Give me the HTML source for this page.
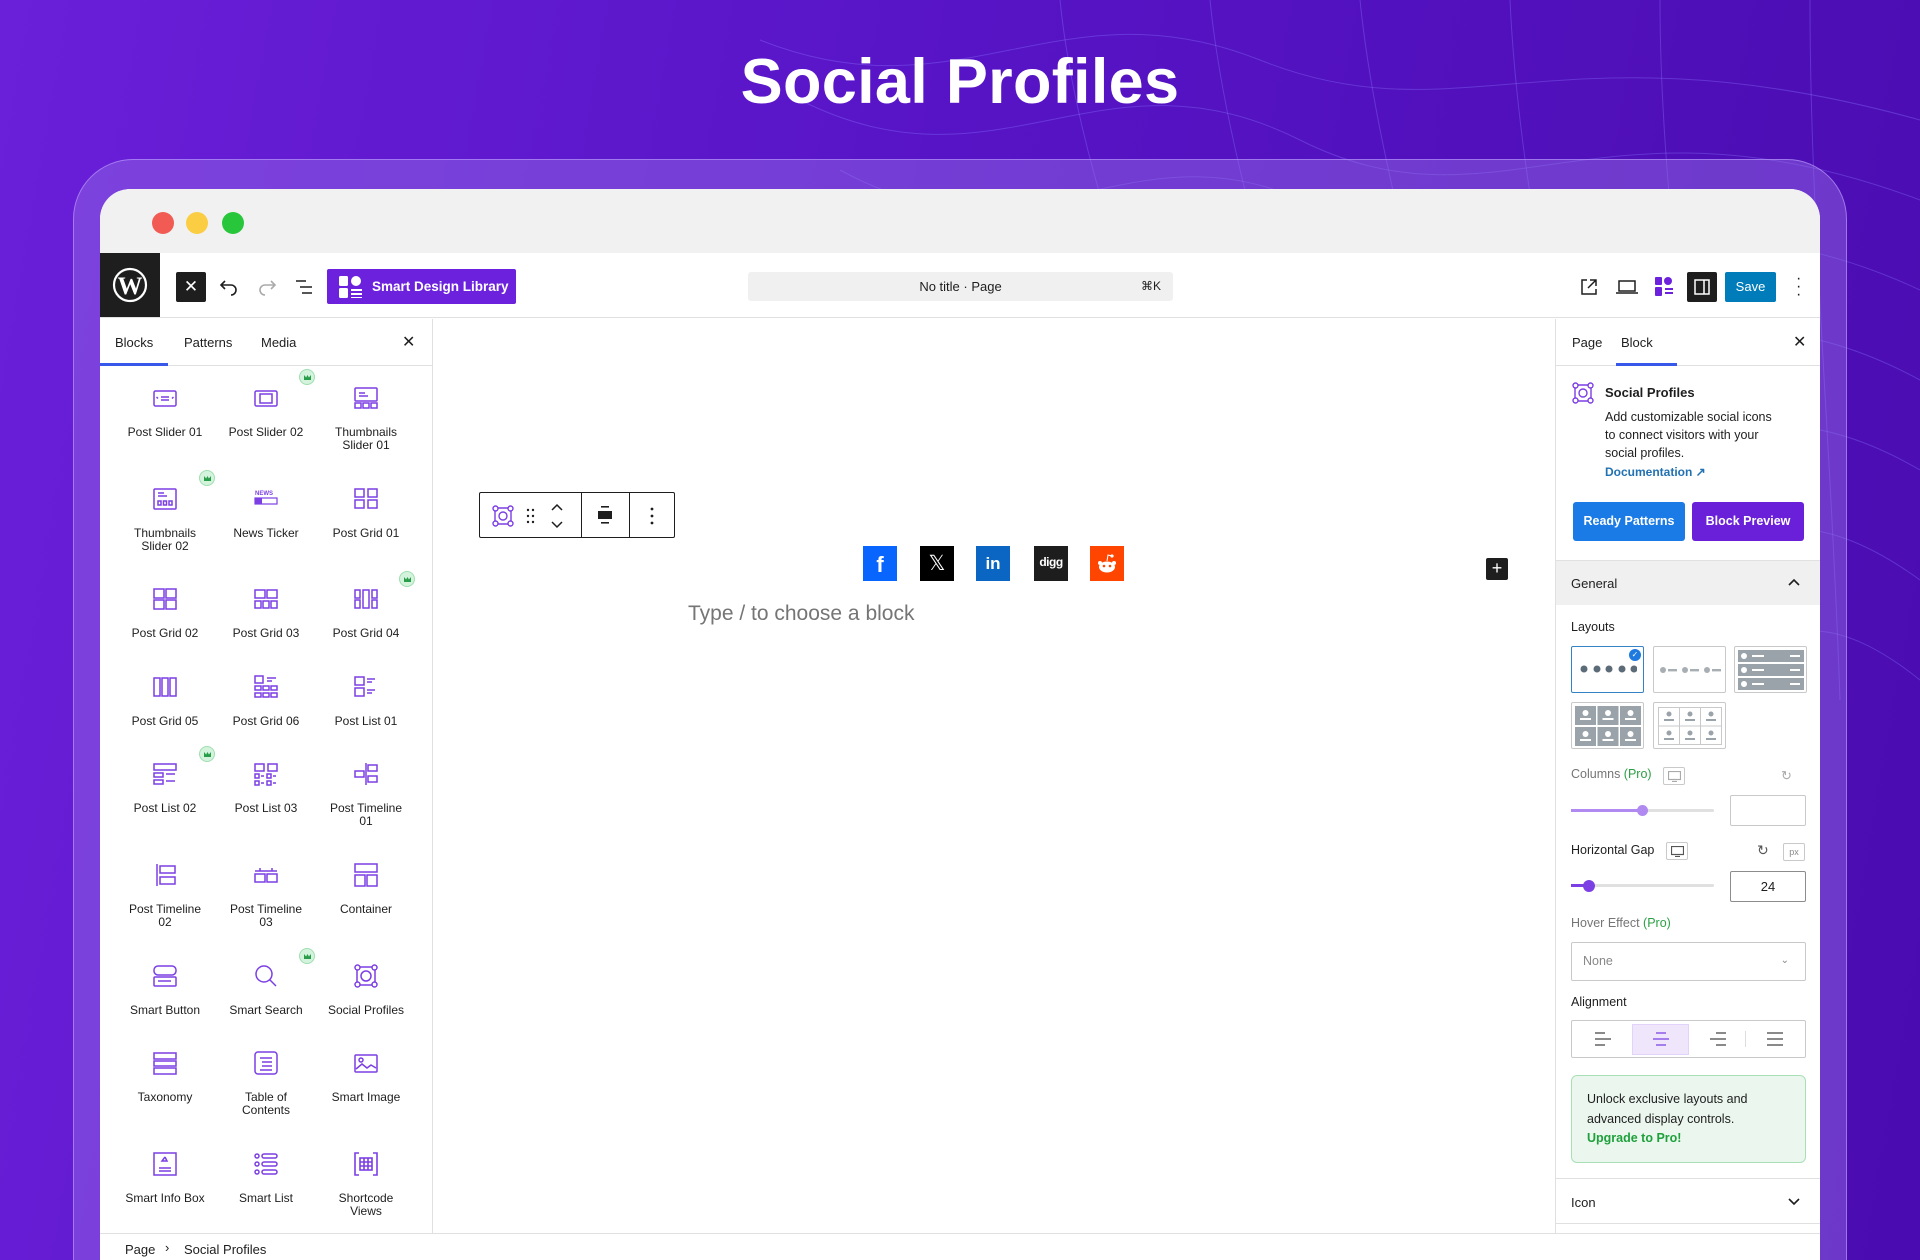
<!DOCTYPE html>
<html style="overflow:hidden;width:1920px;height:1260px"><head><meta charset="utf-8"><style>
*{box-sizing:border-box;margin:0;padding:0}
body{width:1920px;height:1260px;overflow:hidden;position:relative;font-family:"Liberation Sans",sans-serif;background:linear-gradient(100deg,#6a1fd8 0%,#5714c6 45%,#4a0cb0 100%);color:#1e1e1e}
.abs{position:absolute}
h1{position:absolute;left:0;width:1920px;top:46px;text-align:center;color:#fff;font-size:63px;font-weight:700;letter-spacing:0.3px}
.frame{left:73px;top:159px;width:1774px;height:1101px;border-radius:60px 60px 0 0;background:rgba(150,110,230,0.45);border:1px solid rgba(190,160,255,0.6);border-bottom:none}
.win{left:100px;top:189px;width:1720px;height:1071px;border-radius:30px 30px 0 0;background:#fff;overflow:hidden}
.tbar{left:0;top:0;width:1720px;height:64px;background:#f1f1f1}
.dot{width:22px;height:22px;border-radius:50%;top:23px}
.hdr{left:0;top:64px;width:1720px;height:65px;background:#fff;border-bottom:1px solid #e0e0e0}
.lsb{left:0;top:130px;width:333px;height:914px;border-right:1px solid #e0e0e0;background:#fff}
.rsb{left:1455px;top:130px;width:265px;height:914px;border-left:1px solid #e0e0e0;background:#fff}
.foot{left:0;top:1044px;width:1720px;height:30px;border-top:1px solid #e0e0e0;background:#fff;font-size:13px}
.item{position:absolute;width:100px;text-align:center;font-size:12px;line-height:13px;color:#1e1e1e}
.item svg{display:block;margin:0 auto 16px}
.crown{position:absolute;width:16px;height:16px;border-radius:50%;background:#d4f3dc;border:1px solid #9fdfb0}
.crown:after{content:"";position:absolute;left:4px;top:5px;width:7px;height:5px;background:#2a9d4a;clip-path:polygon(0 100%,0 0,30% 50%,50% 0,70% 50%,100% 0,100% 100%)}
.lbl{font-size:12.5px;color:#1e1e1e}
.pro{color:#2aa044}
.box{position:absolute;border:1px solid #c9c9c9;border-radius:2px;background:#fff}
</style></head><body>
<svg class="abs" style="left:760px;top:0" width="1160" height="900" fill="none" stroke="rgba(140,120,255,0.35)" stroke-width="1">
<path d="M0 40 C200 120 300 -20 500 60 S800 20 1160 120"/>
<path d="M40 100 C240 200 340 40 540 140 S840 80 1160 200"/>
<path d="M80 170 C280 280 380 100 580 220 S880 160 1160 290"/>
<path d="M140 260 C320 380 420 180 620 320 S900 240 1160 380"/>
<path d="M200 360 C360 460 460 260 660 420 S920 330 1160 470"/>
<path d="M300 460 C420 520 520 340 720 520 S940 420 1160 580"/>
<path d="M400 560 C480 600 580 420 780 620 S960 520 1160 680"/>
<path d="M300 0 C320 200 420 400 460 600"/><path d="M450 0 C470 200 560 420 600 640"/>
<path d="M600 0 C620 200 700 400 720 660"/><path d="M750 0 C760 220 820 420 840 680"/>
<path d="M900 0 C900 220 940 420 960 700"/><path d="M1050 0 C1050 220 1070 420 1080 700"/>
</svg>
<h1>Social Profiles</h1>
<div class="abs frame"></div>
<div class="abs win">
 <div class="abs tbar"></div>
 <div class="abs dot" style="left:52px;background:#f25a54"></div>
 <div class="abs dot" style="left:86px;background:#fbcd42"></div>
 <div class="abs dot" style="left:122px;background:#28c73b"></div>
 <div class="abs hdr">
  <div class="abs" style="left:0;top:0;width:60px;height:64px;background:#1e1e1e"><svg style="margin:14px 12px" width="36" height="36" viewBox="0 0 36 36"><circle cx="18" cy="18" r="16" fill="none" stroke="#fff" stroke-width="2.2"/><text x="18" y="27" text-anchor="middle" fill="#fff" font-family="Liberation Serif" font-weight="700" font-size="25">W</text></svg></div>
  <div class="abs" style="left:76px;top:19px;width:30px;height:30px;background:#1e1e1e;border-radius:2px;color:#fff;text-align:center;line-height:30px;font-size:17px">✕</div>
  <svg class="abs" style="left:119px;top:24px" width="20" height="20" fill="none" stroke="#1e1e1e" stroke-width="1.6"><path d="M6 4 L2 8 L6 12 M2 8 H12 A5 5 0 0 1 12 18"/></svg>
  <svg class="abs" style="left:157px;top:24px" width="20" height="20" fill="none" stroke="#aaa" stroke-width="1.6"><path d="M14 4 L18 8 L14 12 M18 8 H8 A5 5 0 0 0 8 18"/></svg>
  <svg class="abs" style="left:194px;top:25px" width="20" height="18" stroke="#1e1e1e" stroke-width="1.6"><path d="M2 3H12M6 9H18M8 15H18"/></svg>
  <div class="abs" style="left:227px;top:16px;width:189px;height:35px;background:#6c22dd;border-radius:2px;color:#fff;font-size:13.5px;font-weight:700;line-height:35px;padding-left:45px">Smart Design Library</div>
  <svg class="abs" style="left:239px;top:23px" width="24" height="22" fill="#fff"><rect x="0" y="0" width="9" height="10" rx="1.5"/><circle cx="17" cy="5" r="5"/><rect x="0" y="12" width="9" height="10" rx="1.5"/><rect x="12" y="13" width="11" height="2"/><rect x="12" y="17" width="11" height="2"/><rect x="12" y="21" width="11" height="1.5"/></svg>
  <div class="abs" style="left:648px;top:19px;width:425px;height:29px;background:#f0f0f0;border-radius:3px;font-size:13px;text-align:center;line-height:29px">No title · Page<span style="position:absolute;right:12px;font-size:12px">⌘K</span></div>
  <svg class="abs" style="left:1479px;top:24px" width="20" height="20" fill="none" stroke="#1e1e1e" stroke-width="1.5"><path d="M8 3H3V17H17V12M11 3H17V9M17 3L9 11"/></svg>
  <svg class="abs" style="left:1516px;top:26px" width="22" height="16" fill="none" stroke="#1e1e1e" stroke-width="1.5"><rect x="3" y="2" width="16" height="10"/><path d="M0 14H22"/></svg>
  <svg class="abs" style="left:1555px;top:24px" width="18" height="20" fill="#6c22dd"><rect x="0" y="0" width="7" height="8" rx="1"/><circle cx="13" cy="4" r="4"/><rect x="0" y="10" width="7" height="9" rx="1"/><rect x="10" y="11" width="8" height="2"/><rect x="10" y="15" width="8" height="2"/></svg>
  <div class="abs" style="left:1587px;top:19px;width:30px;height:30px;background:#1e1e1e;border-radius:2px"><svg style="margin:7px" width="16" height="16" fill="none" stroke="#fff" stroke-width="1.5"><rect x="1" y="1" width="14" height="14"/><path d="M10 1V15"/></svg></div>
  <div class="abs" style="left:1625px;top:19px;width:51px;height:30px;background:#007cba;border-radius:2px;color:#fff;font-size:13px;text-align:center;line-height:30px">Save</div>
  <div class="abs" style="left:1696px;top:22px;width:4px;font-size:16px;line-height:8px;color:#1e1e1e">·<br>·<br>·</div>
 </div>
 <div class="abs lsb">
  <div class="abs" style="left:0;top:0;width:333px;height:47px;border-bottom:1px solid #e0e0e0;font-size:13px">
   <span class="abs" style="left:15px;top:16px">Blocks</span><span class="abs" style="left:84px;top:16px">Patterns</span><span class="abs" style="left:161px;top:16px">Media</span><span class="abs" style="left:302px;top:13px;font-size:16px">✕</span>
   <div class="abs" style="left:0;top:44px;width:68px;height:3px;background:#3858e9"></div>
  </div>
 </div>
 <div class="abs rsb">
  <div class="abs" style="left:0;top:0;width:265px;height:47px;border-bottom:1px solid #e0e0e0;font-size:13px">
   <span class="abs" style="left:16px;top:16px">Page</span><span class="abs" style="left:65px;top:16px">Block</span><span class="abs" style="left:237px;top:13px;font-size:16px">✕</span>
   <div class="abs" style="left:60px;top:44px;width:61px;height:3px;background:#3858e9"></div>
  </div>
 </div>
 <div class="abs foot"><span class="abs" style="left:25px;top:8px">Page</span><span class="abs" style="left:65px;top:6px">›</span><span class="abs" style="left:84px;top:8px">Social Profiles</span></div>
</div>

<div class="item" style="left:115px;top:386px"><svg width="24" height="24" fill="none" stroke="#7b3fe4" stroke-width="1.5"><rect x="1" y="5" width="22" height="15" rx="1.5"/><path d="M8 11H16M8 14H16M5 12.5L3.5 11M19 12.5L20.5 11"/></svg>Post Slider 01</div>
<div class="item" style="left:216px;top:386px"><svg width="24" height="24" fill="none" stroke="#7b3fe4" stroke-width="1.5"><rect x="1" y="5" width="22" height="15" rx="1.5"/><rect x="6" y="8" width="12" height="9"/></svg>Post Slider 02</div>
<div class="item" style="left:316px;top:386px"><svg width="24" height="24" fill="none" stroke="#7b3fe4" stroke-width="1.5"><rect x="1" y="2" width="22" height="13" rx="1"/><path d="M5 7H11M5 10H14"/><rect x="1" y="17" width="6" height="5"/><rect x="9" y="17" width="6" height="5"/><rect x="17" y="17" width="6" height="5"/></svg>Thumbnails<br>Slider 01</div>
<div class="item" style="left:115px;top:487px"><svg width="24" height="24" fill="none" stroke="#7b3fe4" stroke-width="1.5"><rect x="1" y="2" width="22" height="20" rx="1"/><path d="M5 6H11M5 9H14"/><rect x="5" y="14" width="3" height="4"/><rect x="10.5" y="14" width="3" height="4"/><rect x="16" y="14" width="3" height="4"/></svg>Thumbnails<br>Slider 02</div>
<div class="item" style="left:216px;top:487px"><svg width="24" height="24"><text x="1" y="8" font-size="6" fill="#7b3fe4" font-weight="700" font-family="Liberation Sans">NEWS</text><rect x="1" y="11" width="22" height="6" fill="none" stroke="#7b3fe4" stroke-width="1.2"/><rect x="1" y="11" width="7" height="6" fill="#7b3fe4"/></svg>News Ticker</div>
<div class="item" style="left:316px;top:487px"><svg width="24" height="24" fill="none" stroke="#7b3fe4" stroke-width="1.5"><rect x="1" y="2" width="9" height="8"/><rect x="14" y="2" width="9" height="8"/><rect x="1" y="13" width="9" height="8"/><rect x="14" y="13" width="9" height="8"/></svg>Post Grid 01</div>
<div class="item" style="left:115px;top:587px"><svg width="24" height="24" fill="none" stroke="#7b3fe4" stroke-width="1.5"><rect x="1" y="2" width="10" height="9"/><rect x="13" y="2" width="10" height="9"/><rect x="1" y="13" width="10" height="9"/><rect x="13" y="13" width="10" height="9"/></svg>Post Grid 02</div>
<div class="item" style="left:216px;top:587px"><svg width="24" height="24" fill="none" stroke="#7b3fe4" stroke-width="1.5"><rect x="1" y="3" width="10" height="8"/><rect x="13" y="3" width="10" height="8"/><rect x="1" y="14" width="6" height="7"/><rect x="9" y="14" width="6" height="7"/><rect x="17" y="14" width="6" height="7"/></svg>Post Grid 03</div>
<div class="item" style="left:316px;top:587px"><svg width="24" height="24" fill="none" stroke="#7b3fe4" stroke-width="1.5"><rect x="1" y="3" width="5" height="8"/><rect x="1" y="13" width="5" height="8"/><rect x="9" y="3" width="6" height="18"/><rect x="18" y="3" width="5" height="8"/><rect x="18" y="13" width="5" height="8"/></svg>Post Grid 04</div>
<div class="item" style="left:115px;top:675px"><svg width="24" height="24" fill="none" stroke="#7b3fe4" stroke-width="1.5"><rect x="1" y="3" width="6" height="18"/><rect x="9" y="3" width="6" height="18"/><rect x="17" y="3" width="6" height="18"/></svg>Post Grid 05</div>
<div class="item" style="left:216px;top:675px"><svg width="24" height="24" fill="none" stroke="#7b3fe4" stroke-width="1.5"><rect x="1" y="1" width="8" height="7"/><path d="M13 3H22M13 6H18"/><rect x="1" y="11" width="6" height="4"/><rect x="9" y="11" width="6" height="4"/><rect x="17" y="11" width="6" height="4"/><rect x="1" y="18" width="6" height="4"/><rect x="9" y="18" width="6" height="4"/><rect x="17" y="18" width="6" height="4"/></svg>Post Grid 06</div>
<div class="item" style="left:316px;top:675px"><svg width="24" height="24" fill="none" stroke="#7b3fe4" stroke-width="1.5"><rect x="1" y="2" width="9" height="8"/><rect x="1" y="13" width="9" height="8"/><path d="M13 4H21M13 7H18M13 15H21M13 18H18"/></svg>Post List 01</div>
<div class="item" style="left:115px;top:762px"><svg width="24" height="24" fill="none" stroke="#7b3fe4" stroke-width="1.5"><rect x="1" y="2" width="22" height="6"/><rect x="1" y="11" width="9" height="4"/><rect x="1" y="18" width="9" height="4"/><path d="M13 12H22M13 19H22"/></svg>Post List 02</div>
<div class="item" style="left:216px;top:762px"><svg width="24" height="24" fill="none" stroke="#7b3fe4" stroke-width="1.5"><rect x="1" y="2" width="9" height="7"/><rect x="14" y="2" width="9" height="7"/><rect x="1" y="12" width="4" height="4"/><rect x="13" y="12" width="4" height="4"/><rect x="1" y="19" width="4" height="4"/><rect x="13" y="19" width="4" height="4"/><path d="M7 14H10M19 14H22M7 21H10M19 21H22"/></svg>Post List 03</div>
<div class="item" style="left:316px;top:762px"><svg width="24" height="24" fill="none" stroke="#7b3fe4" stroke-width="1.5"><path d="M12 1V23"/><rect x="14" y="3" width="9" height="6"/><rect x="14" y="14" width="9" height="6"/><rect x="1" y="9" width="9" height="6"/></svg>Post Timeline<br>01</div>
<div class="item" style="left:115px;top:863px"><svg width="24" height="24" fill="none" stroke="#7b3fe4" stroke-width="1.5"><path d="M4 1V23"/><rect x="7" y="3" width="15" height="7"/><rect x="7" y="14" width="15" height="7"/></svg>Post Timeline<br>02</div>
<div class="item" style="left:216px;top:863px"><svg width="24" height="24" fill="none" stroke="#7b3fe4" stroke-width="1.5"><path d="M1 8H23M6 5V8M18 5V8"/><rect x="1" y="11" width="10" height="8"/><rect x="13" y="11" width="10" height="8"/></svg>Post Timeline<br>03</div>
<div class="item" style="left:316px;top:863px"><svg width="24" height="24" fill="none" stroke="#7b3fe4" stroke-width="1.5"><rect x="1" y="1" width="22" height="8"/><rect x="1" y="12" width="10" height="11"/><rect x="13" y="12" width="10" height="11"/></svg>Container</div>
<div class="item" style="left:115px;top:964px"><svg width="24" height="24" fill="none" stroke="#7b3fe4" stroke-width="1.5"><rect x="1" y="2" width="22" height="9" rx="4"/><rect x="1" y="13" width="22" height="9" rx="1"/><path d="M5 17H18"/></svg>Smart Button</div>
<div class="item" style="left:216px;top:964px"><svg width="24" height="24" fill="none" stroke="#7b3fe4" stroke-width="1.5"><circle cx="10" cy="10" r="8"/><path d="M16 16L22 22"/></svg>Smart Search</div>
<div class="item" style="left:316px;top:964px"><svg width="24" height="24" fill="none" stroke="#7b3fe4" stroke-width="1.5"><rect x="3" y="3" width="18" height="18" rx="3"/><circle cx="12" cy="12" r="5"/><circle cx="3.5" cy="3.5" r="2.5" fill="#fff"/><circle cx="20.5" cy="3.5" r="2.5" fill="#fff"/><circle cx="3.5" cy="20.5" r="2.5" fill="#fff"/><circle cx="20.5" cy="20.5" r="2.5" fill="#fff"/></svg>Social Profiles</div>
<div class="item" style="left:115px;top:1051px"><svg width="24" height="24" fill="none" stroke="#7b3fe4" stroke-width="1.5"><rect x="1" y="2" width="22" height="6"/><rect x="1" y="10" width="22" height="5"/><rect x="1" y="17" width="22" height="6"/></svg>Taxonomy</div>
<div class="item" style="left:216px;top:1051px"><svg width="24" height="24" fill="none" stroke="#7b3fe4" stroke-width="1.5"><rect x="1" y="1" width="22" height="22" rx="3"/><path d="M6 7H18M8 11H18M8 15H18M6 19H18"/></svg>Table of<br>Contents</div>
<div class="item" style="left:316px;top:1051px"><svg width="24" height="24" fill="none" stroke="#7b3fe4" stroke-width="1.5"><rect x="1" y="4" width="22" height="17" rx="1"/><circle cx="7" cy="9" r="2"/><path d="M2 18L8 13L13 17L17 14L22 17"/></svg>Smart Image</div>
<div class="item" style="left:115px;top:1152px"><svg width="24" height="24" fill="none" stroke="#7b3fe4" stroke-width="1.5"><rect x="1" y="1" width="22" height="22"/><path d="M12 5L14 9L9 9L12 5M6 16H18M6 19H18"/></svg>Smart Info Box</div>
<div class="item" style="left:216px;top:1152px"><svg width="24" height="24" fill="none" stroke="#7b3fe4" stroke-width="1.5"><circle cx="3" cy="4" r="2"/><circle cx="3" cy="12" r="2"/><circle cx="3" cy="20" r="2"/><rect x="8" y="2" width="15" height="4" rx="2"/><rect x="8" y="10" width="15" height="4" rx="2"/><rect x="8" y="18" width="15" height="4" rx="2"/></svg>Smart List</div>
<div class="item" style="left:316px;top:1152px"><svg width="24" height="24" fill="none" stroke="#7b3fe4" stroke-width="1.6"><path d="M5 1H1V23H5M19 1H23V23H19"/><rect x="6" y="6" width="12" height="12"/><path d="M6 10H18M6 14H18M10 6V18M14 6V18"/></svg>Shortcode<br>Views</div>
<div class="crown" style="left:299px;top:369px"></div>
<div class="crown" style="left:199px;top:470px"></div>
<div class="crown" style="left:399px;top:571px"></div>
<div class="crown" style="left:199px;top:746px"></div>
<div class="crown" style="left:299px;top:948px"></div>

<div class="abs" style="left:479px;top:492px;width:196px;height:46px;border:1px solid #1e1e1e;background:#fff;border-radius:2px">
 <svg class="abs" style="left:12px;top:12px" width="22" height="22" fill="none" stroke="#7b3fe4" stroke-width="1.4"><rect x="3" y="3" width="16" height="16" rx="3"/><circle cx="11" cy="11" r="4"/><circle cx="3.5" cy="3.5" r="2.5" fill="#fff"/><circle cx="18.5" cy="3.5" r="2.5" fill="#fff"/><circle cx="3.5" cy="18.5" r="2.5" fill="#fff"/><circle cx="18.5" cy="18.5" r="2.5" fill="#fff"/></svg>
 <svg class="abs" style="left:46px;top:15px" width="10" height="16" fill="#1e1e1e"><circle cx="2" cy="2" r="1.2"/><circle cx="7" cy="2" r="1.2"/><circle cx="2" cy="8" r="1.2"/><circle cx="7" cy="8" r="1.2"/><circle cx="2" cy="14" r="1.2"/><circle cx="7" cy="14" r="1.2"/></svg>
 <svg class="abs" style="left:70px;top:10px" width="14" height="26" fill="none" stroke="#1e1e1e" stroke-width="1.5"><path d="M2 7L7 2L12 7M2 19L7 24L12 19"/></svg>
 <div class="abs" style="left:101px;top:0;width:1px;height:44px;background:#1e1e1e"></div>
 <svg class="abs" style="left:117px;top:12px" width="16" height="20" fill="#1e1e1e"><rect x="4" y="1" width="8" height="1.6"/><rect x="1" y="6" width="14" height="8"/><rect x="4" y="17" width="8" height="1.6"/></svg>
 <div class="abs" style="left:149px;top:0;width:1px;height:44px;background:#1e1e1e"></div>
 <svg class="abs" style="left:170px;top:14px" width="4" height="18" fill="#1e1e1e"><circle cx="2" cy="2" r="1.4"/><circle cx="2" cy="9" r="1.4"/><circle cx="2" cy="16" r="1.4"/></svg>
</div>
<div class="abs" style="left:863px;top:546px;width:34px;height:35px;background:#0866ff;color:#fff;font-weight:700;font-size:22px;text-align:center;line-height:37px">f</div>
<div class="abs" style="left:920px;top:546px;width:34px;height:35px;background:#000;color:#fff;font-size:21px;text-align:center;line-height:35px">𝕏</div>
<div class="abs" style="left:976px;top:546px;width:34px;height:35px;background:#0a66c2;color:#fff;font-weight:700;font-size:17px;text-align:center;line-height:35px">in</div>
<div class="abs" style="left:1034px;top:546px;width:34px;height:35px;background:#1d1d1d;color:#fff;font-weight:700;font-size:12px;text-align:center;line-height:33px;letter-spacing:-0.5px">digg</div>
<div class="abs" style="left:1090px;top:546px;width:34px;height:35px;background:#ff4500"><svg style="margin:7px 6px" width="22" height="22"><ellipse cx="11" cy="14" rx="8" ry="5.5" fill="#fff"/><circle cx="4" cy="10" r="2" fill="#fff"/><circle cx="18" cy="10" r="2" fill="#fff"/><circle cx="16" cy="3" r="1.6" fill="#fff"/><path d="M11 8L12 2L16 3" stroke="#fff" fill="none"/><circle cx="8" cy="13" r="1.3" fill="#ff4500"/><circle cx="14" cy="13" r="1.3" fill="#ff4500"/></svg></div>
<div class="abs" style="left:688px;top:602px;font-size:21px;color:#757575">Type / to choose a block</div>
<div class="abs" style="left:1486px;top:558px;width:22px;height:22px;background:#1e1e1e;border-radius:2px;color:#fff;text-align:center;line-height:21px;font-size:18px">+</div>

<svg class="abs" style="left:1572px;top:382px" width="22" height="22" fill="none" stroke="#7b3fe4" stroke-width="1.4"><rect x="3" y="3" width="16" height="16" rx="3"/><circle cx="11" cy="11" r="4"/><circle cx="3.5" cy="3.5" r="2.5" fill="#fff"/><circle cx="18.5" cy="3.5" r="2.5" fill="#fff"/><circle cx="3.5" cy="18.5" r="2.5" fill="#fff"/><circle cx="18.5" cy="18.5" r="2.5" fill="#fff"/></svg>
<div class="abs" style="left:1605px;top:385px;font-size:13px;font-weight:600">Social Profiles</div>
<div class="abs" style="left:1605px;top:408px;font-size:12.5px;line-height:18px;width:172px">Add customizable social icons to connect visitors with your social profiles.</div>
<div class="abs" style="left:1605px;top:465px;font-size:12px;font-weight:700;color:#2271b1">Documentation ↗</div>
<div class="abs" style="left:1573px;top:502px;width:112px;height:39px;background:#1a7be6;border-radius:3px;color:#fff;font-weight:700;font-size:12.5px;text-align:center;line-height:39px">Ready Patterns</div>
<div class="abs" style="left:1692px;top:502px;width:112px;height:39px;background:#6a1fd9;border-radius:3px;color:#fff;font-weight:700;font-size:12.5px;text-align:center;line-height:39px">Block Preview</div>
<div class="abs" style="left:1556px;top:560px;width:264px;height:45px;background:#f0f0f0;border-top:1px solid #e0e0e0"><span class="abs" style="left:15px;top:15px;font-size:13px;font-weight:500">General</span><svg class="abs" style="left:232px;top:17px" width="12" height="8" fill="none" stroke="#1e1e1e" stroke-width="1.6"><path d="M1 7L6 2L11 7"/></svg></div>
<div class="abs lbl" style="left:1571px;top:620px">Layouts</div>
<div class="box" style="left:1571px;top:646px;width:73px;height:47px;border:1.5px solid #3582c4"><svg class="abs" style="left:7px;top:17px" width="58" height="10" fill="#5c6b78"><circle cx="5" cy="5" r="3.5"/><circle cx="18" cy="5" r="3.5"/><circle cx="30" cy="5" r="3.5"/><circle cx="43" cy="5" r="3.5"/><circle cx="55" cy="5" r="3.5"/></svg><div class="abs" style="left:57px;top:2px;width:12px;height:12px;border-radius:50%;background:#1f7ae0;color:#fff;font-size:8px;text-align:center;line-height:12px">✓</div></div>
<div class="box" style="left:1653px;top:646px;width:73px;height:47px"><svg class="abs" style="left:5px;top:18px" width="62" height="10" fill="#a7aeb4"><circle cx="4" cy="5" r="3"/><rect x="9" y="4" width="9" height="2.4"/><circle cx="26" cy="5" r="3"/><rect x="31" y="4" width="9" height="2.4"/><circle cx="48" cy="5" r="3"/><rect x="53" y="4" width="9" height="2.4"/></svg></div>
<div class="box" style="left:1734px;top:646px;width:73px;height:47px"><svg class="abs" style="left:3px;top:3px" width="66" height="40"><g fill="#9aa3aa"><rect x="0" y="0" width="66" height="12"/><rect x="0" y="14" width="66" height="12"/><rect x="0" y="28" width="66" height="12"/></g><g fill="#fff"><circle cx="6" cy="6" r="3"/><circle cx="6" cy="20" r="3"/><circle cx="6" cy="34" r="3"/><rect x="14" y="5" width="12" height="2"/><rect x="14" y="19" width="12" height="2"/><rect x="14" y="33" width="12" height="2"/><rect x="52" y="5" width="10" height="2"/><rect x="52" y="19" width="10" height="2"/><rect x="52" y="33" width="10" height="2"/></g></svg></div>
<div class="box" style="left:1571px;top:702px;width:73px;height:47px"><svg class="abs" style="left:3px;top:3px" width="66" height="40"><g fill="#9aa3aa"><rect x="0" y="0" width="21" height="19"/><rect x="22.5" y="0" width="21" height="19"/><rect x="45" y="0" width="21" height="19"/><rect x="0" y="21" width="21" height="19"/><rect x="22.5" y="21" width="21" height="19"/><rect x="45" y="21" width="21" height="19"/></g><g fill="#fff"><circle cx="10.5" cy="7" r="3"/><circle cx="33" cy="7" r="3"/><circle cx="55.5" cy="7" r="3"/><circle cx="10.5" cy="28" r="3"/><circle cx="33" cy="28" r="3"/><circle cx="55.5" cy="28" r="3"/><rect x="5" y="12" width="11" height="2"/><rect x="27.5" y="12" width="11" height="2"/><rect x="50" y="12" width="11" height="2"/><rect x="5" y="33" width="11" height="2"/><rect x="27.5" y="33" width="11" height="2"/><rect x="50" y="33" width="11" height="2"/></g></svg></div>
<div class="box" style="left:1653px;top:702px;width:73px;height:47px"><svg class="abs" style="left:4px;top:4px" width="64" height="38"><rect x="0.5" y="0.5" width="63" height="37" fill="none" stroke="#c9c9c9"/><path d="M21.5 0V38M42.5 0V38M0 19H64" stroke="#c9c9c9"/><g fill="#9aa3aa"><circle cx="11" cy="7" r="2.5"/><circle cx="32" cy="7" r="2.5"/><circle cx="53" cy="7" r="2.5"/><circle cx="11" cy="26" r="2.5"/><circle cx="32" cy="26" r="2.5"/><circle cx="53" cy="26" r="2.5"/><rect x="6" y="12" width="10" height="2"/><rect x="27" y="12" width="10" height="2"/><rect x="48" y="12" width="10" height="2"/><rect x="6" y="31" width="10" height="2"/><rect x="27" y="31" width="10" height="2"/><rect x="48" y="31" width="10" height="2"/></g></svg></div>
<div class="abs lbl" style="left:1571px;top:767px;color:#757575">Columns <span class="pro">(Pro)</span></div>
<div class="box" style="left:1663px;top:767px;width:22px;height:18px"><svg style="margin:3px 4px" width="13" height="11" fill="none" stroke="#aaa" stroke-width="1.2"><rect x="0.5" y="0.5" width="12" height="8"/><path d="M4 10.5H9"/></svg></div>
<div class="abs" style="left:1781px;top:768px;font-size:13px;color:#aaa">↻</div>
<div class="abs" style="left:1571px;top:809px;width:143px;height:3px;background:#e0e0e0;border-radius:2px"><div style="width:72px;height:3px;background:#b08af0"></div></div>
<div class="abs" style="left:1637px;top:805px;width:11px;height:11px;border-radius:50%;background:#b08af0"></div>
<div class="box" style="left:1730px;top:795px;width:76px;height:31px"></div>
<div class="abs lbl" style="left:1571px;top:843px">Horizontal Gap</div>
<div class="box" style="left:1666px;top:842px;width:22px;height:18px"><svg style="margin:3px 4px" width="13" height="11" fill="none" stroke="#555" stroke-width="1.2"><rect x="0.5" y="0.5" width="12" height="8"/><path d="M4 10.5H9"/></svg></div>
<div class="abs" style="left:1757px;top:842px;font-size:14px;color:#555">↻</div>
<div class="box" style="left:1783px;top:843px;width:22px;height:18px;font-size:9px;color:#888;text-align:center;line-height:16px">px</div>
<div class="abs" style="left:1571px;top:884px;width:143px;height:3px;background:#e0e0e0;border-radius:2px"><div style="width:17px;height:3px;background:#7b3fe4"></div></div>
<div class="abs" style="left:1583px;top:880px;width:12px;height:12px;border-radius:50%;background:#7b3fe4"></div>
<div class="box" style="left:1730px;top:871px;width:76px;height:31px;border-color:#8c8c8c;text-align:center;line-height:29px;font-size:13px">24</div>
<div class="abs lbl" style="left:1571px;top:916px;color:#757575">Hover Effect <span class="pro">(Pro)</span></div>
<div class="box" style="left:1571px;top:942px;width:235px;height:39px;font-size:12.5px;color:#888;line-height:37px;padding-left:11px">None<span style="position:absolute;right:16px;top:-1px;font-size:10px">⌄</span></div>
<div class="abs lbl" style="left:1571px;top:995px">Alignment</div>
<div class="box" style="left:1571px;top:1020px;width:235px;height:38px"><div class="abs" style="left:60px;top:3px;width:57px;height:31px;background:#efe6fc;border:1px solid #e2d3fa"></div>
<svg class="abs" style="left:23px;top:11px" width="16" height="14" stroke="#444" stroke-width="1.3"><path d="M0 1H10M0 7H16M0 13H10"/></svg>
<svg class="abs" style="left:81px;top:11px" width="16" height="14" stroke="#7b3fe4" stroke-width="1.3"><path d="M3 1H13M0 7H16M3 13H13"/></svg>
<svg class="abs" style="left:138px;top:11px" width="16" height="14" stroke="#444" stroke-width="1.3"><path d="M6 1H16M0 7H16M6 13H16"/></svg>
<div class="abs" style="left:173px;top:10px;width:1px;height:16px;background:#ddd"></div>
<svg class="abs" style="left:195px;top:11px" width="16" height="14" stroke="#444" stroke-width="1.3"><path d="M0 1H16M0 7H16M0 13H16"/></svg></div>
<div class="abs" style="left:1571px;top:1075px;width:235px;height:88px;background:#ebf7ee;border:1px solid #a8e0b6;border-radius:6px;padding:14px 15px;font-size:12.5px;line-height:19.5px">Unlock exclusive layouts and advanced display controls.<br><b style="color:#1ea03c">Upgrade to Pro!</b></div>
<div class="abs" style="left:1556px;top:1178px;width:264px;height:46px;border-top:1px solid #e0e0e0;border-bottom:1px solid #e0e0e0"><span class="abs" style="left:15px;top:16px;font-size:13px">Icon</span><svg class="abs" style="left:232px;top:19px" width="12" height="8" fill="none" stroke="#1e1e1e" stroke-width="1.6"><path d="M1 1L6 6L11 1"/></svg></div>
</body></html>
